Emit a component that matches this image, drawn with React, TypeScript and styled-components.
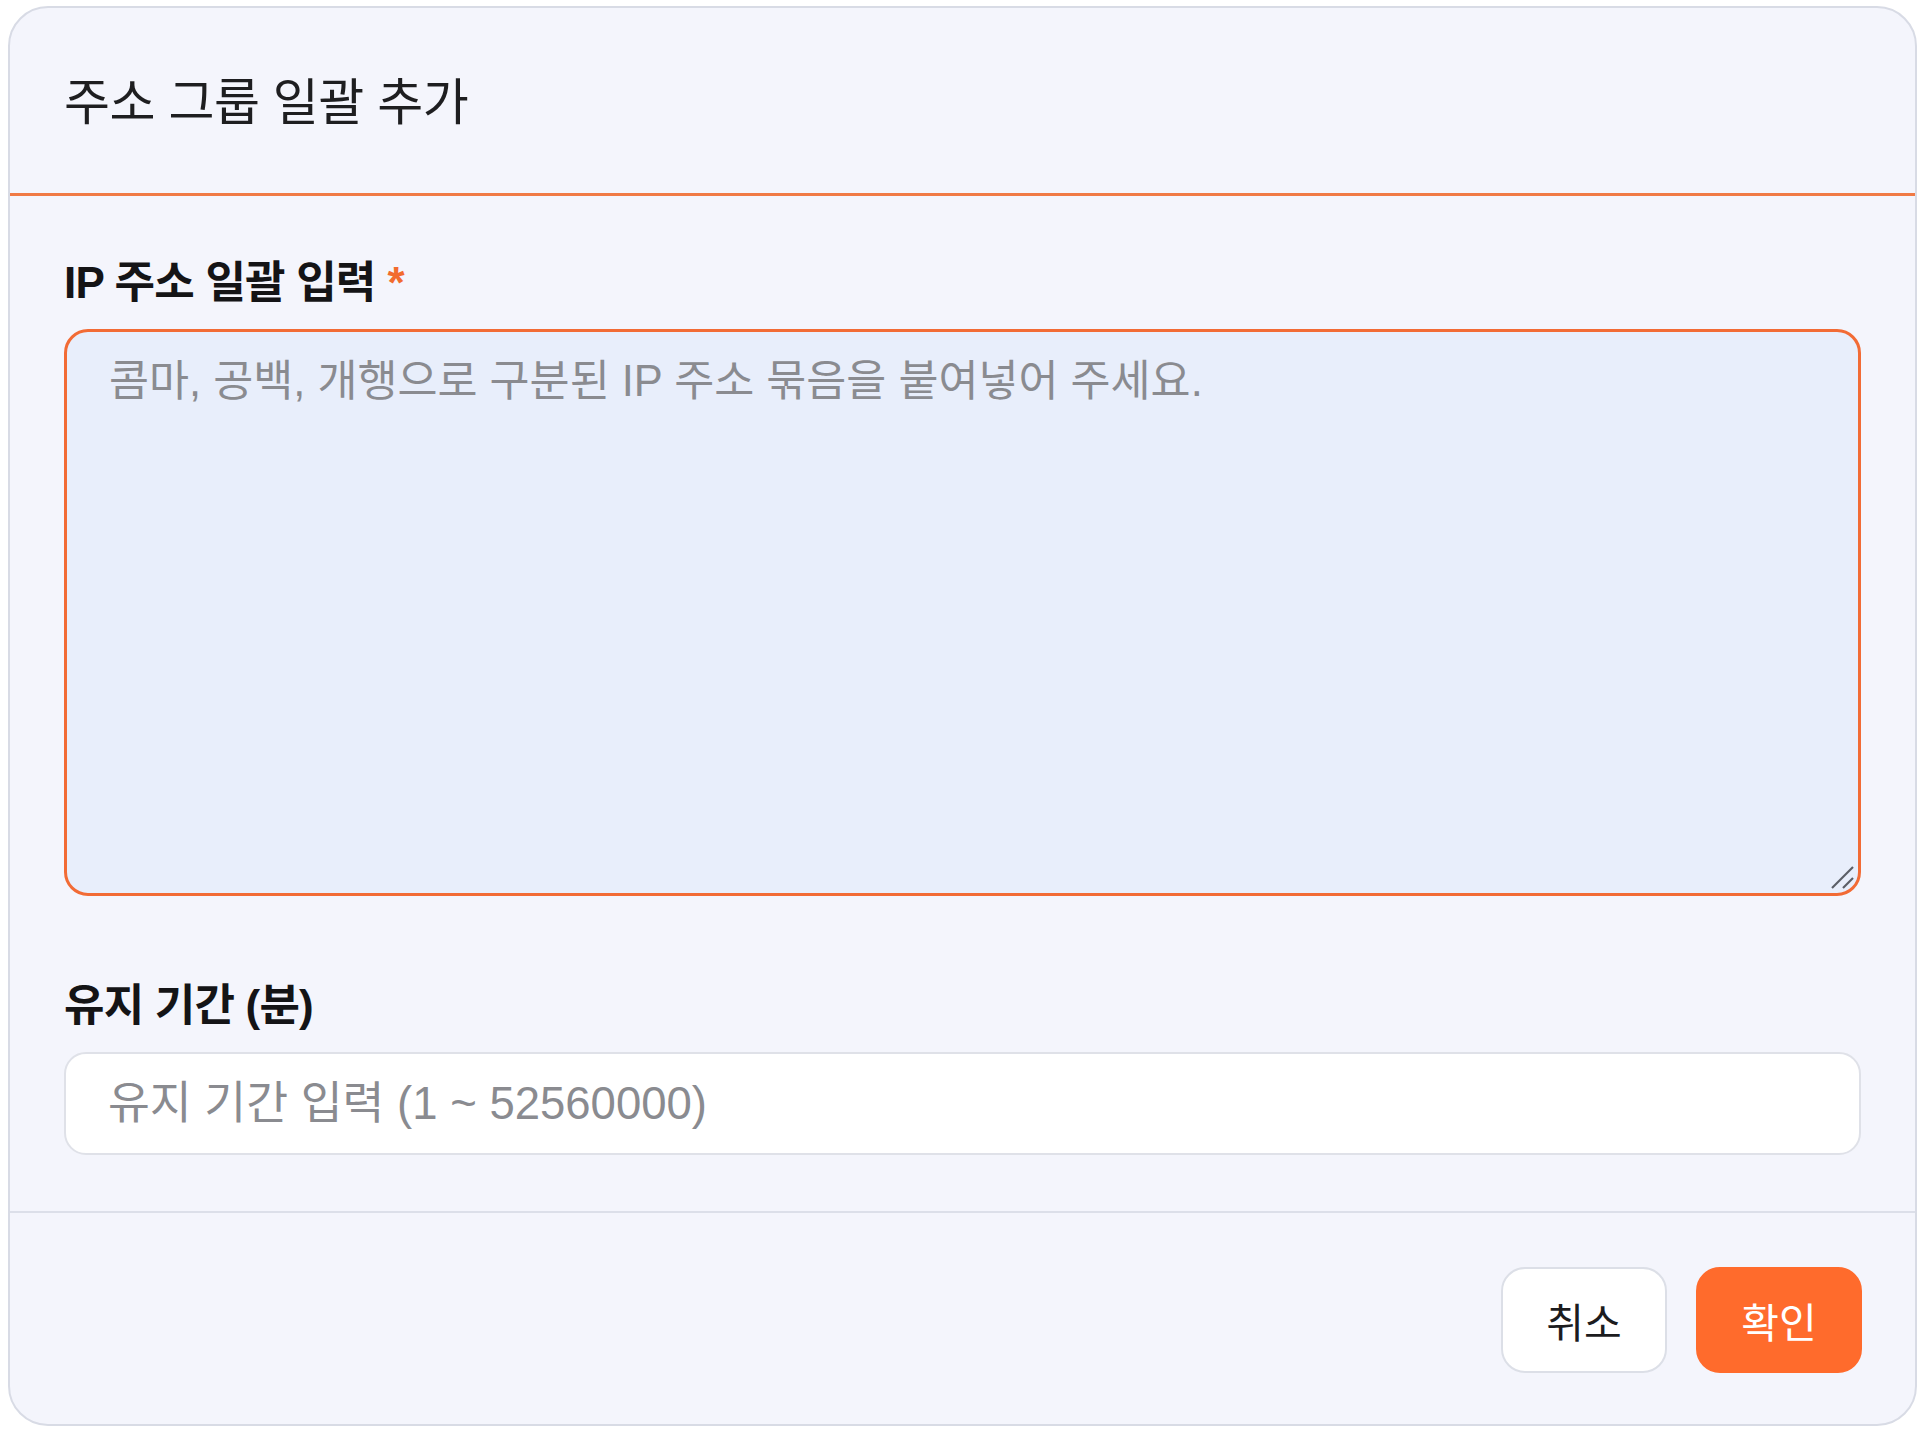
import { createGlobalStyle } from "styled-components";
import styled from "styled-components";

const GlobalStyle = createGlobalStyle`
  html, body {
    margin: 0;
    padding: 0;
    background: #ffffff;
  }
  body {
    font-family: "Liberation Sans", "Noto Sans CJK KR", sans-serif;
    color: #1c1c1e;
  }
  * {
    box-sizing: border-box;
  }
`;

const Page = styled.div`
  padding: 6px 0 0 8px;
`;

const Dialog = styled.div`
  width: 1909px;
  height: 1420px;
  display: flex;
  flex-direction: column;
  background: #f4f5fc;
  border: 2px solid #d8dbe5;
  border-radius: 40px;
  overflow: hidden;
`;

const Header = styled.div`
  height: 188px;
  flex-shrink: 0;
  display: flex;
  align-items: center;
  padding: 0 54px 6px;
  border-bottom: 3px solid #f07a45;
`;

const Title = styled.h2`
  margin: 0;
  font-size: 50px;
  font-weight: 400;
  letter-spacing: -0.5px;
  color: #1e1e20;
`;

const Body = styled.div`
  display: flex;
  flex-direction: column;
  padding: 57px 54px 56px;
  border-bottom: 2px solid #dcdfe9;
`;

const Field = styled.div<{ $gap?: number }>`
  display: flex;
  flex-direction: column;
  gap: 16px;
  margin-top: ${(p) => p.$gap ?? 0}px;
`;

const Label = styled.label`
  font-size: 44px;
  line-height: 60px;
  font-weight: 700;
  color: #141416;
  letter-spacing: -0.8px;
`;

const Required = styled.span`
  color: #f26b2e;
  margin-left: 12px;
`;

const AreaWrap = styled.div`
  position: relative;
  display: flex;
`;

const TextArea = styled.textarea`
  height: 567px;
  width: 100%;
  resize: none;
  padding: 20px 42px;
  background: #e8eefb;
  border: 3px solid #f26b35;
  border-radius: 24px;
  outline: none;
  font-family: inherit;
  font-size: 43.5px;
  line-height: 58px;
  color: #1c1c1e;
  caret-color: #111;

  &::placeholder {
    color: #8a8b90;
  }
`;

const Grip = styled.svg`
  position: absolute;
  right: 5px;
  bottom: 5px;
  width: 28px;
  height: 28px;
  pointer-events: none;
`;

const Input = styled.input`
  height: 103px;
  width: 100%;
  padding: 0 42px;
  background: #ffffff;
  border: 2px solid #dfe1e8;
  border-radius: 22px;
  outline: none;
  font-family: inherit;
  font-size: 45.5px;
  color: #1c1c1e;

  &::placeholder {
    color: #8a8b90;
  }
`;

const Footer = styled.div`
  flex: 1;
  display: flex;
  justify-content: flex-end;
  align-items: flex-start;
  gap: 29px;
  padding: 54px 53px 0;
`;

const Button = styled.button<{ $primary?: boolean }>`
  width: 166px;
  height: 106px;
  border-radius: 24px;
  font-family: inherit;
  font-size: 41px;
  cursor: pointer;
  border: 2px solid ${(p) => (p.$primary ? "#ff6b2c" : "#dcdfe7")};
  background: ${(p) => (p.$primary ? "#ff6b2c" : "#ffffff")};
  color: ${(p) => (p.$primary ? "#ffffff" : "#1c1c1e")};
`;

export default function App() {
  return (
    <>
      <GlobalStyle />
      <Page>
        <Dialog>
          <Header>
            <Title>주소 그룹 일괄 추가</Title>
          </Header>
          <Body>
            <Field>
              <Label>
                IP 주소 일괄 입력<Required>*</Required>
              </Label>
              <AreaWrap>
                <TextArea
                  autoFocus
                  placeholder="콤마, 공백, 개행으로 구분된 IP 주소 묶음을 붙여넣어 주세요."
                />
                <Grip viewBox="0 0 28 28">
                  <line x1="25" y1="4" x2="4" y2="25" stroke="#5b5e66" strokeWidth="2.2" />
                  <line x1="25" y1="15" x2="15" y2="25" stroke="#5b5e66" strokeWidth="2.2" />
                </Grip>
              </AreaWrap>
            </Field>
            <Field $gap={80}>
              <Label>유지 기간 (분)</Label>
              <Input placeholder="유지 기간 입력 (1 ~ 52560000)" />
            </Field>
          </Body>
          <Footer>
            <Button>취소</Button>
            <Button $primary>확인</Button>
          </Footer>
        </Dialog>
      </Page>
    </>
  );
}
